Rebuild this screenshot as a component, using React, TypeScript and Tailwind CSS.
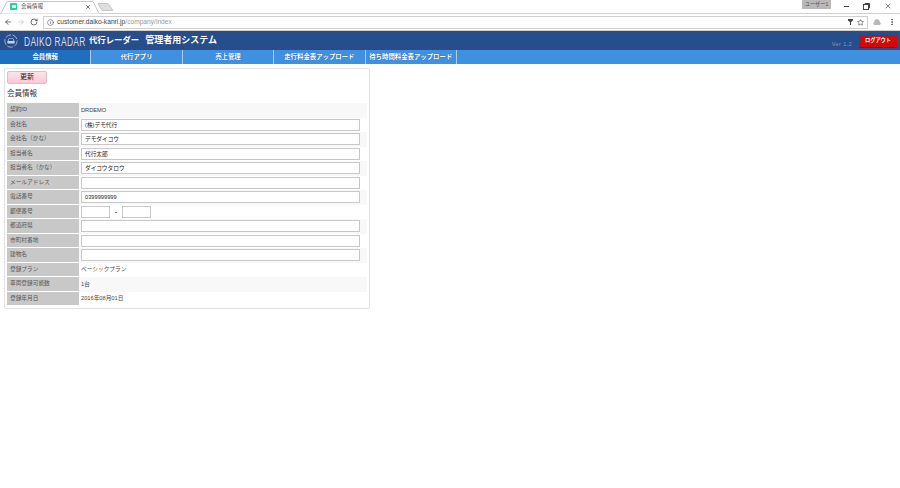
import { ArrowLeft, ArrowRight, RotateCw, Info, Star, MoreVertical, X } from "lucide-react";

const NAV = ["会員情報", "代行アプリ", "売上管理", "走行料金表アップロード", "待ち時間料金表アップロード"];

type Row = { label: string; value?: string; kind: "text" | "input" | "zip"; shade?: boolean };
const ROWS: Row[] = [
  { label: "契約ID", value: "DRDEMO", kind: "text", shade: true },
  { label: "会社名", value: "(株)デモ代行", kind: "input" },
  { label: "会社名（かな）", value: "デモダイコウ", kind: "input", shade: true },
  { label: "担当者名", value: "代行太郎", kind: "input" },
  { label: "担当者名（かな）", value: "ダイコウタロウ", kind: "input", shade: true },
  { label: "メールアドレス", kind: "input" },
  { label: "電話番号", value: "0399999999", kind: "input", shade: true },
  { label: "郵便番号", kind: "zip" },
  { label: "都道府県", kind: "input", shade: true },
  { label: "市町村番地", kind: "input" },
  { label: "建物名", kind: "input", shade: true },
  { label: "登録プラン", value: "ベーシックプラン", kind: "text" },
  { label: "車両登録可能数", value: "1台", kind: "text", shade: true },
  { label: "登録年月日", value: "2016年08月01日", kind: "text" },
];

const FONT = "font-['Liberation_Sans','Noto_Sans_CJK_JP',sans-serif]";

function Field({ value, className }: { value?: string; className: string }) {
  return (
    <div className={`h-[12px] border border-[#c8c8c8] bg-white pl-[3px] text-[5.7px] leading-[10px] text-[#222] ${className}`}>
      {value}
    </div>
  );
}

export default function App() {
  return (
    <div className={`h-[488px] w-[900px] overflow-hidden bg-white ${FONT}`}>
      {/* tab strip */}
      <div className="relative flex h-[14px] items-center border-b border-[#cfcfcf] bg-white">
        <svg className="absolute left-0 top-0" width="116" height="14" viewBox="0 0 116 14" fill="none">
          <path d="M0 13.5H1L7 1.5H93L99 13.5" stroke="#c8c8c8" fill="#fff" />
          <path d="M98 3.5H108L113 10.5H102Z" fill="#dedede" stroke="#c4c4c4" />
        </svg>
        <div className="relative ml-[10px] flex h-[7px] w-[7px] items-center justify-center rounded-[1px] bg-[#2bd19b]">
          <div className="h-[3px] w-[4px] bg-white" />
        </div>
        <span className="relative ml-[4px] text-[5.5px] text-[#444]">会員情報</span>
        <X className="relative ml-[42px] text-[#444]" size={6} strokeWidth={3} />
        <div className="absolute left-[802px] top-0 flex h-[9px] w-[29px] items-center justify-center bg-[#b9b9b9] text-[5.2px] text-[#555]">ユーザー1</div>
        <div className="absolute right-0 top-0 flex h-[12px] items-center gap-[14px] pr-[8px] text-[#444]">
          <div className="h-px w-[5px] bg-[#444]" />
          <svg width="7" height="7" viewBox="0 0 7 7" fill="none" stroke="#444" strokeWidth="1"><rect x="0.5" y="1.5" width="5" height="5" /><path d="M2 1.5V.5h4.5V5H5.5" /></svg>
          <X size={8} strokeWidth={2} />
        </div>
      </div>

      {/* address bar */}
      <div className="flex h-[17px] items-center border-b border-[#cfcfcf] bg-white pl-[4px]">
        <ArrowLeft size={8} strokeWidth={2.5} className="text-[#555]" />
        <ArrowRight size={8} strokeWidth={2.5} className="ml-[5px] text-[#ccc]" />
        <RotateCw size={8} strokeWidth={2.5} className="ml-[5px] text-[#555]" />
        <div className="ml-[5px] flex h-[13px] w-[825px] items-center border border-[#cfcfcf] bg-white pl-[3px]">
          <Info size={7} className="text-[#555]" />
          <span className="ml-[3px] text-[6.65px] text-[#444]">customer.daiko-kanri.jp<span className="text-[#999]">/company/index</span></span>
          <svg className="ml-auto" width="5" height="6" viewBox="0 0 6 7" fill="#444"><path d="M0 0h6v1.6L3.7 3.4V7H2.3V3.4L0 1.6z" /></svg>
          <Star size={7} className="ml-[4px] mr-[3px] text-[#444]" />
        </div>
        <svg className="ml-[5px]" width="8" height="8" viewBox="0 0 8 8" fill="#b8b8b8"><path d="M1.5 7A1.5 1.5 0 0 1 1 4.2C1.5 2 2.8 1 4 1s2.5 1 3 3.2A1.5 1.5 0 0 1 6.5 7z" /></svg>
        <MoreVertical size={8} className="ml-[7px] text-[#555]" strokeWidth={3} />
      </div>

      {/* header */}
      <div className="flex h-[19px] items-center bg-[#264d8c] pl-[4px] text-white">
        <svg width="14" height="14" viewBox="0 0 14 14" fill="none" stroke="#c9d6ea">
          <circle cx="7" cy="7" r="6.2" strokeWidth="0.7" strokeDasharray="6 1.5" />
          <path d="M3.4 9.6V7.4L4.8 4.4h4.4l1.4 3v2.2z" fill="#c9d6ea" stroke="none" />
          <path d="M5.2 5h3.6l.8 2H4.4z" fill="#264d8c" stroke="none" />
        </svg>
        <div className="ml-[6px] w-[61px]">
          <span className="inline-block origin-left scale-x-[0.7] whitespace-nowrap text-[12px] tracking-[0.5px] text-[#d5deec]">DAIKO RADAR</span>
        </div>
        <span className="ml-[4px] text-[8.4px] font-bold">代行レーダー</span>
        <span className="ml-[6px] text-[9px] font-bold">管理者用システム</span>
        <span className="ml-auto mt-[7px] text-[5.5px] tracking-[0.4px] text-[#8a9dbd]">Ver 1.2</span>
        <div className="ml-[7px] mr-[3px] mt-[1px] flex h-[13px] w-[38px] items-center justify-center rounded-[1px] border-b border-[#a00808] bg-[#d00a0a] text-[5.2px] font-bold text-white">ログアウト</div>
      </div>

      {/* nav */}
      <div className="flex h-[14px] bg-[#4090e0]">
        {NAV.map((n, i) => (
          <div
            key={n}
            className={`flex w-[91.4px] shrink-0 items-center justify-center whitespace-nowrap border-r border-[#a9cdf0] text-[6.4px] font-bold text-white ${i === 0 ? "bg-[#1f6fc0]" : ""} [text-shadow:0_0_1px_#1a4a80]`}
          >
            {n}
          </div>
        ))}
      </div>

      {/* panel */}
      <div className="ml-[4px] mt-[4px] h-[241px] w-[366px] rounded-[2px] border border-[#e2e2e2] bg-white pl-[2px] pt-[2px]">
        <div className="flex h-[13px] w-[40px] items-center justify-center rounded-[2px] border border-[#dcc0c6] bg-gradient-to-b from-[#fde4ea] to-[#fcc8d4] text-[7px] text-[#222]">更新</div>
        <div className="mt-[4px] h-[11px] text-[7.5px] leading-[11px] text-[#333]">会員情報</div>
        <div className="mt-[4px] grid w-[360px] grid-cols-[72px_1fr] auto-rows-[14.5px]">
          {ROWS.map((r) => (
            <div key={r.label} className="contents">
              <div className="flex items-center border-b border-white bg-[#c8c8c8] pl-[3px] text-[5.7px] text-[#555]">{r.label}</div>
              <div className={`flex items-center pl-[2px] ${r.shade ? "bg-[#f8f8f8]" : ""}`}>
                {r.kind === "text" && <span className="text-[5.7px] text-[#444]">{r.value}</span>}
                {r.kind === "input" && <Field value={r.value} className="w-[279px]" />}
                {r.kind === "zip" && (
                  <>
                    <Field className="w-[29px]" />
                    <span className="mx-[4px] w-[4px] text-center text-[6.5px] font-bold text-[#444]">-</span>
                    <Field className="w-[29px]" />
                  </>
                )}
              </div>
            </div>
          ))}
        </div>
      </div>
    </div>
  );
}
